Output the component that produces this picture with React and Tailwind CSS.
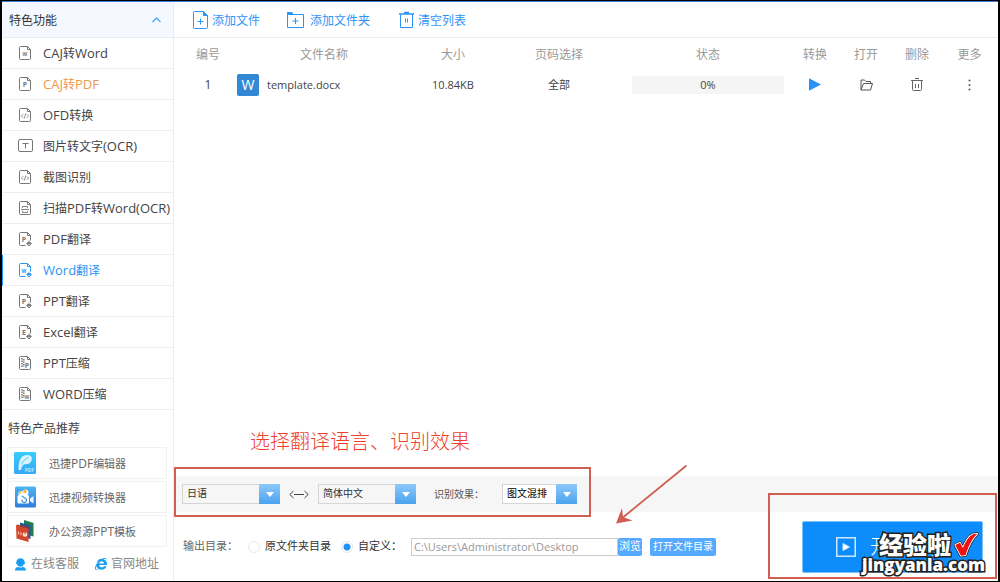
import React, { useState } from "react";
import { FaInternetExplorer } from "react-icons/fa";

const menuItems = [
  { name: "CAJ转Word", icon: "file", letter: "W" },
  { name: "CAJ转PDF", icon: "file", letter: "P", highlight: true },
  { name: "OFD转换", icon: "code" },
  { name: "图片转文字(OCR)", icon: "text" },
  { name: "截图识别", icon: "code" },
  { name: "扫描PDF转Word(OCR)", icon: "scan" },
  { name: "PDF翻译", icon: "translate", letter: "P" },
  { name: "Word翻译", icon: "translate", letter: "W" },
  { name: "PPT翻译", icon: "translate", letter: "P" },
  { name: "Excel翻译", icon: "translate", letter: "E" },
  { name: "PPT压缩", icon: "zip", letter: "P" },
  { name: "WORD压缩", icon: "zip", letter: "W" },
];

// latin letters are set one size larger than the chinese ones
const MixedText = ({ text, latin }) =>
  text.split(/([A-Za-z()]+)/).map((part, i) =>
    i % 2 ? (
      <span key={i} className={latin}>
        {part}
      </span>
    ) : (
      part
    )
  );

const MenuIcon = ({ icon, letter }) => {
  if (icon == "text") {
    return (
      <svg width="15" height="14" viewBox="0 0 15 14" fill="none" stroke="currentColor">
        <rect x="0.5" y="0.5" width="14" height="12" rx="1.5" />
        <path d="M4.5 4.5h6M7.5 4.5v5" />
      </svg>
    );
  }
  return (
    <svg width="15" height="15" viewBox="0 0 15 15" fill="none" stroke="currentColor">
      {icon == "translate" ? (
        <path d="M7.5 13.5h-5a1 1 0 0 1-1-1v-11a1 1 0 0 1 1-1h7l3 3v5" />
      ) : (
        <path d="M2.5.5h7l3 3v9a1 1 0 0 1-1 1h-9a1 1 0 0 1-1-1v-11a1 1 0 0 1 1-1z" />
      )}
      <path d="M9.5.5v3h3" />
      {icon == "code" && (
        <path d="M5.2 6.2L3.4 8l1.800 1.800M8.800 6.200L10.600 8 8.800 9.800M7.700 5.500l-1.400 5" strokeWidth="0.8" />
      )}
      {icon == "scan" && <path d="M4.500 7V5.500h5V7M3 8.500h8M4.500 10v1.500h5V10" strokeWidth="0.9" />}
      {icon == "translate" && (
        <path d="M11 8.500v5.500M8.500 11.500L11 14l2.500-2.500zM9 10.500h4" strokeWidth="0.9" />
      )}
      {icon == "zip" && (
        <path d="M4 2v9M5.800 3v8" strokeDasharray="1.500 1" strokeWidth="1.500" />
      )}
      {letter && (
        <text
          x={icon == "zip" ? 9 : icon == "translate" ? 6 : 7}
          y={icon == "zip" ? 11.5 : 10}
          textAnchor="middle"
          fontSize={letter == "W" ? 5 : 7}
          fontWeight="700"
          fill="currentColor"
          stroke="none"
        >
          {letter}
        </text>
      )}
    </svg>
  );
};

const PdfLogo = () => (
  <svg width="22" height="22" viewBox="0 0 22 22">
    <defs>
      <linearGradient id="pdfBg" x1="0" y1="0" x2="0" y2="1">
        <stop offset="0" stopColor="#35cdfb" />
        <stop offset="1" stopColor="#38a8f3" />
      </linearGradient>
    </defs>
    <rect width="22" height="22" rx="1.500" fill="url(#pdfBg)" />
    <path
      d="M4.500 18C4.500 13 5 9 7 6c1.800-2.700 4.500-3.300 7-3 3.500.4 4.600 3 3.500 5.800-1.200 3-4 3.800-7.500 3.400-2 1.400-2.500 3.300-3 5.800z"
      fill="#d8f3ff"
    />
    <path d="M7.500 12.500C8.500 9.500 11 7 14.500 5.500" fill="none" stroke="#5cc3f3" />
    <text x="15.500" y="20" fontSize="5" fontWeight="700" fill="#b5e4ff" textAnchor="middle">
      PDF
    </text>
  </svg>
);

const VideoLogo = () => (
  <svg width="22" height="22" viewBox="0 0 22 22">
    <defs>
      <linearGradient id="videoBg" x1="0" y1="0" x2="0" y2="1">
        <stop offset="0" stopColor="#4cb4f2" />
        <stop offset="1" stopColor="#2f7fdc" />
      </linearGradient>
    </defs>
    <rect x="1" y="0.5" width="21" height="21" rx="1.500" fill="url(#videoBg)" />
    <circle cx="7" cy="7.500" r="2.500" fill="#fff" />
    <circle cx="11.500" cy="6.500" r="3" fill="#fff" />
    <circle cx="6" cy="6.500" r="1.200" fill="#f7b72b" />
    <circle cx="11" cy="5.500" r="1.700" fill="#f7b72b" />
    <rect x="3.500" y="9" width="11.500" height="8.500" rx="1.500" fill="#fff" />
    <path d="M16 12.500l3.500-2.500v7.500L16 15z" fill="#e8f5ff" />
    <path d="M8 10l3.200 2.300a2.200 2.200 0 1 1-3 1.200" fill="none" stroke="#3d92e6" strokeWidth="1.200" />
  </svg>
);

const PptLogo = () => (
  <svg width="22" height="24" viewBox="0 0 22 24">
    <path d="M10 1l9.500 3v13.500L10 15z" fill="#1f7d4c" />
    <path d="M6 3.500l10.500 3V20L6 17z" fill="#2a559b" />
    <path d="M2 6.500l12.500 3V23L2.500 19.500z" fill="#d3472a" />
    <path d="M2 6.500l1-1 12.500 3-1 1z" fill="#a8381d" />
    <circle cx="11" cy="15.500" r="2.300" fill="#fbe3da" />
    <path d="M11 15.500v-3" stroke="#d3472a" />
    <path d="M4.500 12.500v3M7 13.200v3" stroke="#f3b6a2" strokeWidth="1.200" />
  </svg>
);

const products = [
  { name: "迅捷PDF编辑器", logo: <PdfLogo /> },
  { name: "迅捷视频转换器", logo: <VideoLogo /> },
  { name: "办公资源PPT模板", logo: <PptLogo /> },
];

const Sidebar = () => {
  const [active, setActive] = useState("Word翻译");
  return (
    <aside className="w-[172px] shrink-0 border-r border-[#ececec] flex flex-col">
      <button className="h-9 pl-[7px] pr-3 flex items-center justify-between bg-[#f5f9ff] border-b border-[#e9ecf0] text-[#333]">
        <span className="pt-0.5">特色功能</span>
        <svg width="9" height="6" viewBox="0 0 9 6" fill="none" stroke="#4ba6f8" strokeWidth="1.300">
          <path d="M.5 5l4-4 4 4" />
        </svg>
      </button>
      <nav>
        {menuItems.map((item) => (
          <button
            key={item.name}
            onClick={() => setActive(item.name)}
            className={`w-full h-[31px] flex items-center gap-2.5 pl-[15px] border-b border-b-[#eeeeee] border-l whitespace-nowrap ${
              active == item.name
                ? "border-l-[#1e90ff] text-[#2b95f8]"
                : "border-l-transparent text-[#777]"
            }`}
          >
            <MenuIcon icon={item.icon} letter={item.letter} />
            <span
              className={`pt-0.5 ${
                active == item.name
                  ? "text-[#2b95f8]"
                  : item.highlight
                  ? "text-[#ee9a45]"
                  : "text-[#444]"
              }`}
            >
              <MixedText text={item.name} latin="text-[13px]" />
            </span>
          </button>
        ))}
      </nav>
      <h2 className="h-[37px] pl-1.5 flex items-center text-[#444]">特色产品推荐</h2>
      <div className="flex flex-col gap-0.5 pl-[5px] pr-1.5 text-[11px] text-[#666]">
        {products.map((p) => (
          <a
            key={p.name}
            href="#"
            className="h-8 pl-1.5 flex items-center gap-[13px] border border-[#f1f1f1]"
          >
            {p.logo}
            <span className="pt-0.5">
              <MixedText text={p.name} latin="text-xs" />
            </span>
          </a>
        ))}
      </div>
      <div className="h-[34px] pl-3 flex items-center text-[#888]">
        <a href="#" className="flex items-center gap-1">
          <svg width="13" height="13" viewBox="0 0 13 13" fill="#1a9cf0">
            <path d="M2.200 4.500a4.300 4.300 0 0 1 8.600 0v1.700h-.9a3.500 3.500 0 0 1-6.800 0h-.9z" />
            <path d="M1 12.500c0-2.500 1.500-3.600 3.500-3.600 1.200.8 2.800.8 4 0 2 0 3.500 1.100 3.500 3.600z" />
          </svg>
          在线客服
        </a>
        <a href="#" className="flex items-center gap-1 ml-4">
          <FaInternetExplorer size={12} className="text-[#1a9cf0]" />
          官网地址
        </a>
      </div>
    </aside>
  );
};

const Toolbar = () => (
  <div className="h-9 shrink-0 pl-[19px] flex items-center border-b border-[#ececec] text-[#2b95f8]">
    <button className="flex items-center gap-1">
      <svg width="15" height="18" viewBox="0 0 15 18" fill="none" stroke="currentColor">
        <path d="M1.500.5h9l4 4v12a1 1 0 0 1-1 1h-12a1 1 0 0 1-1-1v-15a1 1 0 0 1 1-1zM7.500 7.500v6M4.500 10.500h6" />
        <path d="M10.500.5v4h4z" fill="currentColor" />
      </svg>
      <span className="pt-0.5">添加文件</span>
    </button>
    <button className="flex items-center gap-1.5 ml-[27px]">
      <svg width="17" height="16" viewBox="0 0 17 16" fill="none" stroke="currentColor">
        <path d="M.5 2.500h16v13H.5zM8.500 6v6M5.500 9h6" />
        <path d="M.5.5h4.500l1 2H.5z" fill="currentColor" />
      </svg>
      <span className="pt-0.5">添加文件夹</span>
    </button>
    <button className="flex items-center gap-1 ml-[29px]">
      <svg width="15" height="17" viewBox="0 0 15 17" fill="none" stroke="currentColor">
        <path d="M1.500 3v13.500h12V3M6.500 7.500v4M8.500 7.500v4" />
        <path d="M0 3h15M5 1.500h5" strokeWidth="1.500" />
      </svg>
      <span className="pt-0.5">清空列表</span>
    </button>
  </div>
);

const FileTable = () => (
  <table className="w-full table-fixed text-center">
    <colgroup>
      <col className="w-[61px]" />
      <col />
      <col className="w-[80px]" />
      <col className="w-[132px]" />
      <col className="w-[166px]" />
      <col className="w-[48px]" />
      <col className="w-[54px]" />
      <col className="w-[48px]" />
      <col className="w-[57px]" />
    </colgroup>
    <thead className="text-[#999]">
      <tr className="h-[34px]">
        <th className="font-normal pl-[7px]">编号</th>
        <th className="font-normal">文件名称</th>
        <th className="font-normal">大小</th>
        <th className="font-normal">页码选择</th>
        <th className="font-normal">状态</th>
        <th className="font-normal">转换</th>
        <th className="font-normal">打开</th>
        <th className="font-normal">删除</th>
        <th className="font-normal">更多</th>
      </tr>
    </thead>
    <tbody className="text-[11px] text-[#444]">
      <tr className="h-[25px]">
        <td className="pl-[7px] text-xs">1</td>
        <td className="pl-0.5">
          <div className="flex items-center gap-2">
            <span className="w-[22px] h-[22px] rounded-xs bg-[#3388d6] text-white text-[14px] leading-[22px]">
              W
            </span>
            <span className="pt-0.5">template.docx</span>
          </div>
        </td>
        <td className="pt-0.5">10.84KB</td>
        <td className="pt-0.5">全部</td>
        <td className="px-[7px]">
          <div className="h-[18px] leading-[18px] bg-[#f5f5f5]">0%</div>
        </td>
        <td>
          <button aria-label="转换" className="block mx-auto">
            <svg width="12" height="13" viewBox="0 0 12 13" fill="#2b90f5">
              <path d="M0 0.200L12 6.500 0 12.800z" />
            </svg>
          </button>
        </td>
        <td>
          <button aria-label="打开" className="block mx-auto">
            <svg width="13" height="12" viewBox="0 0 13 12" fill="none" stroke="#555">
              <path
                d="M1 11V1h3.500l1.500 1.500h4.500v2M1 11l2.500-6.500h9L10.500 11z"
                strokeLinejoin="round"
              />
            </svg>
          </button>
        </td>
        <td>
          <button aria-label="删除" className="block mx-auto">
            <svg width="12" height="13" viewBox="0 0 12 13" fill="none" stroke="#666">
              <path d="M0 2.500h12M4 .5h4M1.500 2.500v9a1 1 0 0 0 1 1h7a1 1 0 0 0 1-1v-9M4.500 6v4M7.500 6v4" />
            </svg>
          </button>
        </td>
        <td>
          <button aria-label="更多" className="block mx-auto">
            <svg width="3" height="12" viewBox="0 0 3 12" fill="#555">
              <circle cx="1.500" cy="1.500" r="1" />
              <circle cx="1.500" cy="6" r="1" />
              <circle cx="1.500" cy="10.500" r="1" />
            </svg>
          </button>
        </td>
      </tr>
    </tbody>
  </table>
);

const Dropdown = ({ label, options, className }) => (
  <div className={`relative h-5 ${className}`}>
    <select
      aria-label={label}
      className="appearance-none block w-full h-full pl-1 pr-5 border border-[#d5d5d5] outline-0 text-[10px]"
    >
      {options.map((o) => (
        <option key={o}>{o}</option>
      ))}
    </select>
    <span className="absolute right-0 inset-y-0 w-[21px] flex items-center justify-center bg-linear-to-b from-[#8cc8fa] to-[#4aa3ef] pointer-events-none">
      <svg width="8" height="5" viewBox="0 0 8 5" fill="#fff">
        <path d="M0 0h8L4 5z" />
      </svg>
    </span>
  </div>
);

const OptionsBar = () => (
  <div className="relative h-9 shrink-0 pl-2 flex items-center bg-[#f6f6f6] text-[#333]">
    <Dropdown label="源语言" options={["日语", "英语", "韩语"]} className="w-[98px]" />
    <svg width="20" height="9" viewBox="0 0 20 9" fill="none" stroke="#444" className="mx-[9px]">
      <path d="M4.500 1L.8 4.500l3.700 3.500M15.500 1l3.700 3.500-3.700 3.500M5 4.500h10" />
    </svg>
    <Dropdown label="目标语言" options={["简体中文", "繁体中文", "英语"]} className="w-[98px]" />
    <span className="w-[68px] ml-[18px] pt-0.5 text-[10px] text-[#555]">识别效果：</span>
    <Dropdown
      label="识别效果"
      options={["图文混排", "仅文字"]}
      className="w-[75px] bg-white text-black"
    />

    <p className="absolute left-[76px] -top-12 text-xl font-light text-[#f0402a] whitespace-nowrap">
      选择翻译语言、识别效果
    </p>
    <div className="absolute left-0 -top-[9px] w-[417px] h-[50px] border-2 border-[#cf5f53] pointer-events-none" />
    <svg
      className="absolute left-[441px] -top-3 pointer-events-none"
      width="75"
      height="62"
      viewBox="0 0 75 62"
    >
      <path d="M71.500 1.500L6 55" stroke="#cf5f53" strokeWidth="1.800" />
      <path d="M1 59.500L7 44l1 9 9.500 3.500z" fill="#cf5f53" />
    </svg>
  </div>
);

const checkPath =
  "M2.500 13l4.500-2 3 5.500C12.500 9.500 16 4.500 20 2.500l4-.5c-5 4.500-8.500 11.500-11.500 21L8 23.500z";

const Watermark = () => (
  <div className="absolute -right-0.5 top-3 flex flex-col items-end text-white whitespace-nowrap pointer-events-none [paint-order:stroke_fill]">
    <div className="flex items-center gap-0.5 pr-1.5 h-6">
      <span className="text-2xl leading-6 font-black [-webkit-text-stroke:3px_#222]">经验啦</span>
      <svg width="26" height="26" viewBox="0 0 26 26" strokeLinejoin="round">
        <path d={checkPath} fill="#e11" stroke="#222" strokeWidth="3.500" />
        <path d={checkPath} fill="#f01212" stroke="#fff" strokeWidth="2" />
        <path d={checkPath} fill="#f01212" />
      </svg>
    </div>
    <span className="text-[17px] leading-4 font-extrabold [-webkit-text-stroke:3px_#222]">
      jingyanla.com
    </span>
  </div>
);

const Footer = () => {
  const [target, setTarget] = useState("custom");
  const [path, setPath] = useState("C:\\Users\\Administrator\\Desktop");
  const radio =
    "appearance-none w-3 h-3 rounded-full border border-[#e8e8e8] bg-white checked:bg-[radial-gradient(circle,#1e8ffc_3px,white_4px)]";
  return (
    <div className="relative h-[69px] shrink-0 pl-[9px] flex items-center text-[11px] text-[#333] whitespace-nowrap">
      <span className="w-[65px] text-[#666]">输出目录：</span>
      <label className="flex items-center gap-[5px]">
        <input
          type="radio"
          name="target"
          className={radio}
          checked={target == "source"}
          onChange={() => setTarget("source")}
        />
        原文件夹目录
      </label>
      <label className="flex items-center gap-[5px] w-[70px] ml-2.5">
        <input
          type="radio"
          name="target"
          className={radio}
          checked={target == "custom"}
          onChange={() => setTarget("custom")}
        />
        自定义：
      </label>
      <input
        type="text"
        aria-label="输出目录"
        className="w-[207px] h-[18px] px-0.5 border border-[#ccc] outline-0 text-[#999]"
        value={path}
        onChange={(e) => setPath(e.target.value)}
      />
      <button className="w-6 h-[18px] rounded-xs bg-[#55aaff] text-white">浏览</button>
      <button className="w-[66px] h-[18px] ml-2 rounded-xs bg-[#55aaff] text-white text-[10px]">
        打开文件目录
      </button>

      <div className="relative ml-auto mr-[15px]">
        <button className="w-[181px] h-[52px] rounded-xs bg-[#0d8cfb] border border-[#7cc0fb] text-white text-xl font-light flex items-center gap-3.5 pl-[33px]">
          <svg width="20" height="20" viewBox="0 0 20 20" fill="none" stroke="#cfe8ff">
            <rect x="0.75" y="0.75" width="18.5" height="18.5" strokeWidth="1.500" />
            <path d="M7 6.500l6.500 3.500L7 13.500z" fill="#fff" />
          </svg>
          开始转换
        </button>
        <Watermark />
      </div>
      <div className="absolute right-px -top-[19px] bottom-0.5 w-[229px] border-2 border-[#cf5f53] pointer-events-none" />
    </div>
  );
};

const App = () => {
  return (
    <div className="min-h-screen flex flex-col bg-white border-x-2 border-y border-black text-xs font-['Open_Sans','Noto_Sans_CJK_SC',sans-serif]">
      <div className="h-px bg-[#3a7fd5]" />
      <div className="flex flex-1">
        <Sidebar />
        <main className="flex-1 min-w-0 flex flex-col">
          <Toolbar />
          <div className="flex-1">
            <FileTable />
          </div>
          <OptionsBar />
          <Footer />
        </main>
      </div>
    </div>
  );
};

export default App;
